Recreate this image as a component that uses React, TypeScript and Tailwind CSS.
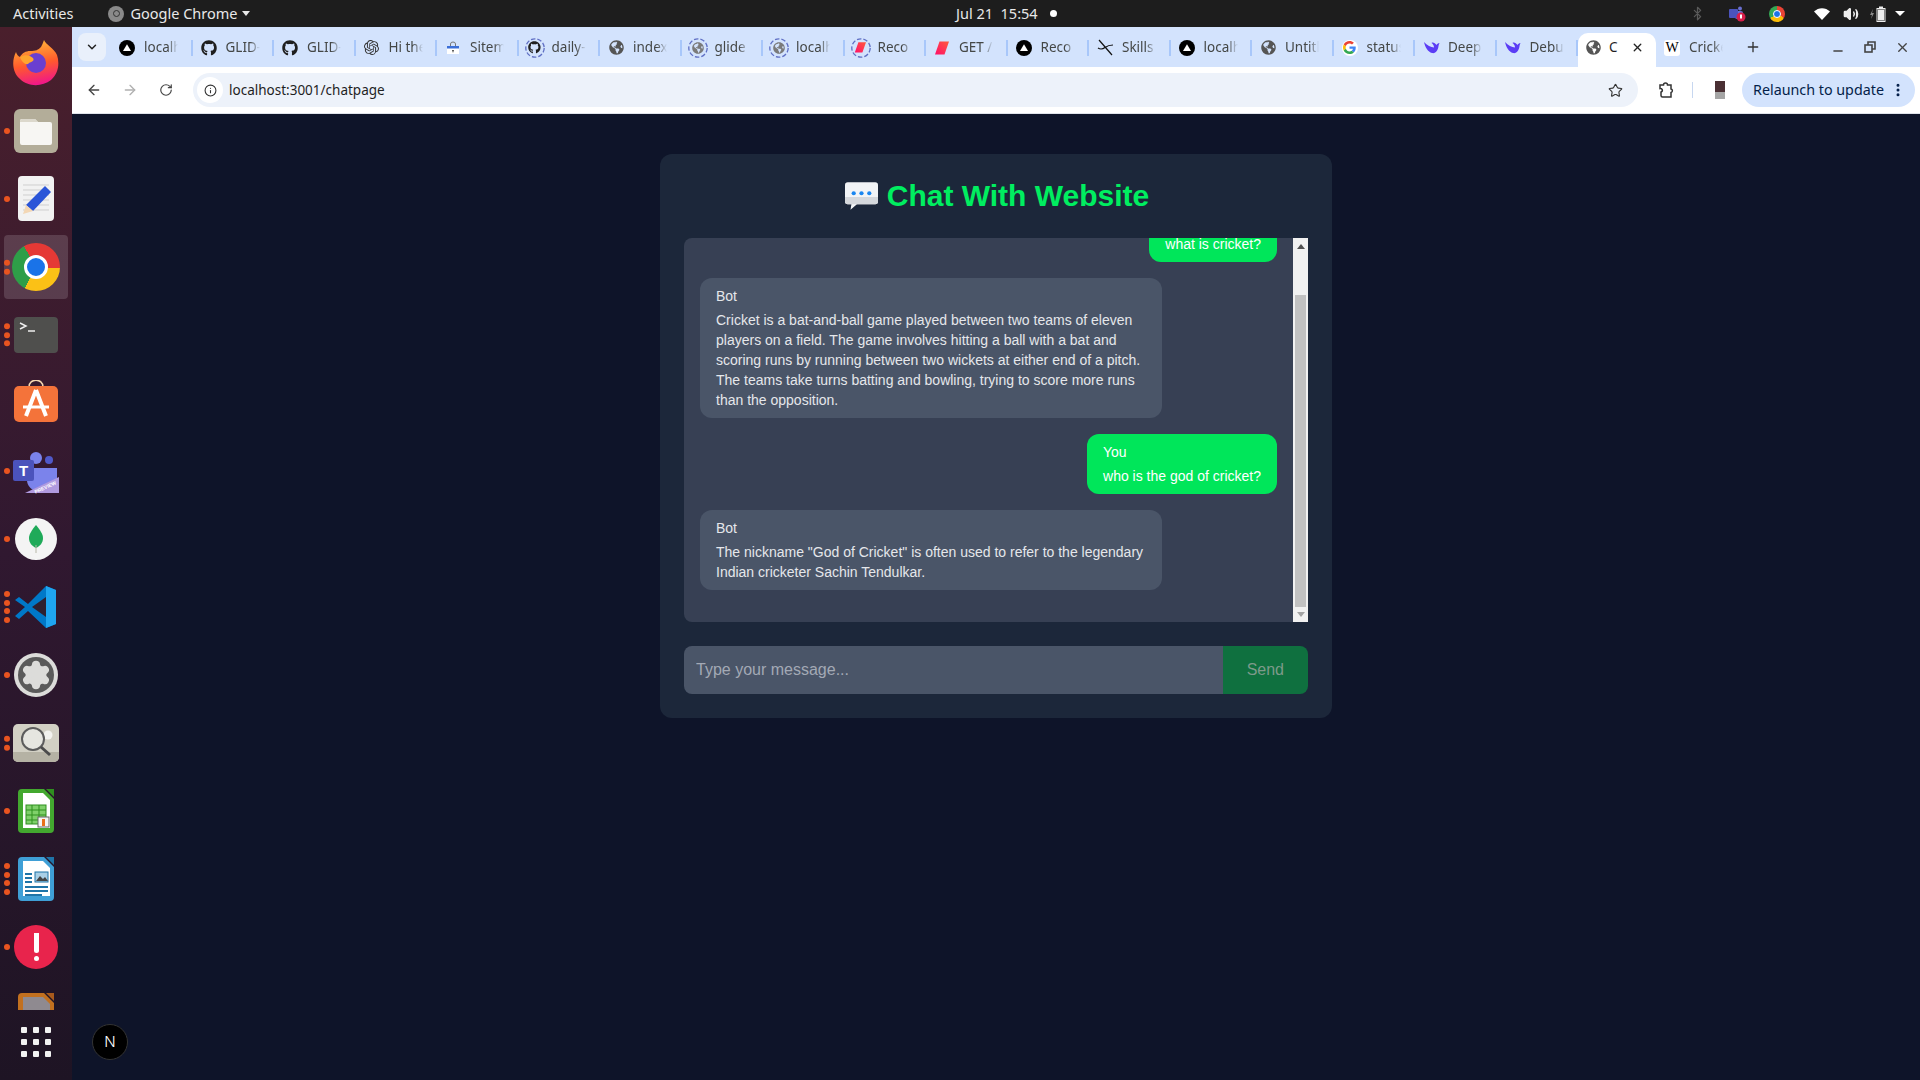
import React from "react";
import { FaGithub, FaGlobeAmericas } from "react-icons/fa";
import { SiOpenai } from "react-icons/si";
import { ArrowLeft, ArrowRight, RotateCw, Info, Star, MoreVertical, X, Plus, Minus, ChevronDown, Bluetooth, Volume2, Settings } from "lucide-react";

type Fav = "vercel" | "github" | "openai" | "site" | "globe" | "red" | "slash" | "google" | "deep" | "wiki";

type Tab = { title: string; fav: Fav; ring?: boolean; active?: boolean };

const tabs: Tab[] = [
  { title: "localhost", fav: "vercel" },
  { title: "GLID-", fav: "github" },
  { title: "GLID-", fav: "github" },
  { title: "Hi there", fav: "openai" },
  { title: "Sitemap", fav: "site" },
  { title: "daily-", fav: "github", ring: true },
  { title: "index", fav: "globe" },
  { title: "glide", fav: "globe", ring: true },
  { title: "localhost", fav: "globe", ring: true },
  { title: "Reco", fav: "red", ring: true },
  { title: "GET /", fav: "red" },
  { title: "Reco", fav: "vercel" },
  { title: "Skills", fav: "slash" },
  { title: "localhost", fav: "vercel" },
  { title: "Untitled", fav: "globe" },
  { title: "status", fav: "google" },
  { title: "Deep", fav: "deep" },
  { title: "Debug", fav: "deep" },
  { title: "Cricket", fav: "globe", active: true },
  { title: "Cricket", fav: "wiki" },
];

// small tab icon, the ones packages dont have are drawn by hand
function Favicon({ fav, ring }: { fav: Fav; ring?: boolean }) {
  let icon: React.ReactNode = null;
  const small = ring ? 0.8 : 1;
  if (fav === "github") icon = <FaGithub size={16 * small} color="#1f1f1f" />;
  if (fav === "openai") icon = <SiOpenai size={15} color="#333" />;
  if (fav === "globe") icon = <FaGlobeAmericas size={15 * small} color={ring ? "#7a7a7a" : "#555"} />;
  if (fav === "vercel")
    icon = (
      <svg width="16" height="16" viewBox="0 0 16 16">
        <circle cx="8" cy="8" r="8" fill="#000" />
        <path d="M8 4.200 12 11H4z" fill="#fff" />
      </svg>
    );
  if (fav === "site")
    icon = (
      <svg width="14" height="14" viewBox="0 0 14 14">
        <rect x="1" y="5" width="12" height="8" fill="#fff" />
        <rect x="1" y="5" width="12" height="2.500" fill="#3b6fd8" />
        <path d="M4.500 5V3a2.500 2 0 0 1 5 0v2" fill="none" stroke="#777" strokeWidth="1" />
        <path d="M6 9h2l-1 3z" fill="#444" />
      </svg>
    );
  if (fav === "red")
    icon = (
      <svg width={16 * small} height={16 * small} viewBox="0 0 16 16">
        <defs>
          <linearGradient id="redfav" x1="0" y1="1" x2="1" y2="0">
            <stop offset="0" stopColor="#ff0f6a" />
            <stop offset="1" stopColor="#ff5a3c" />
          </linearGradient>
        </defs>
        <path d="M5.500 1.500H15L10.500 14.500H1z" fill="url(#redfav)" />
      </svg>
    );
  if (fav === "slash")
    icon = (
      <svg width="17" height="17" viewBox="0 0 17 17" fill="none" stroke="#111" strokeWidth="1.2">
        <path d="M2 1 15 16" />
        <path d="M1 9c3 2 5 1 7-.5s4-2.500 8-2.500" />
      </svg>
    );
  if (fav === "google")
    icon = (
      <span className="flex h-[16px] w-[16px] items-center justify-center rounded-full bg-white">
        <svg width="13" height="13" viewBox="0 0 48 48">
          <path fill="#EA4335" d="M24 9.500c3.500 0 6.700 1.200 9.200 3.600l6.900-6.900C35.900 2.400 30.500 0 24 0 14.600 0 6.500 5.400 2.600 13.200l8 6.200C12.400 13.700 17.700 9.500 24 9.500z" />
          <path fill="#4285F4" d="M47 24.500c0-1.600-.1-3.100-.4-4.500H24v9h12.900c-.6 3-2.200 5.500-4.700 7.200l7.700 6C44.400 38.100 47 31.900 47 24.500z" />
          <path fill="#FBBC05" d="M10.600 28.600c-.5-1.400-.8-3-.8-4.600s.3-3.200.8-4.600l-8-6.200C.9 16.500 0 20.100 0 24s.9 7.500 2.600 10.800z" />
          <path fill="#34A853" d="M24 48c6.500 0 11.900-2.100 15.900-5.800l-7.700-6c-2.200 1.400-4.900 2.300-8.200 2.300-6.300 0-11.600-4.200-13.400-9.900l-8 6.200C6.500 42.600 14.600 48 24 48z" />
        </svg>
      </span>
    );
  if (fav === "deep")
    icon = (
      <svg width="17" height="15" viewBox="0 0 17 15">
        <path d="M1 2c1 5 4 10 8 11 3 .8 5-1.500 6-4.500.6-1.700.4-3.500 1.500-5.500-1.500.4-2.500 1-3 2C12 3 10 2 8.500 3c1.500 1 2.500 2.500 2.500 4.500C8 7.500 4 5 1 2z" fill="#5b3df5" />
      </svg>
    );
  if (fav === "wiki")
    icon = (
      <span className="flex h-[16px] w-[16px] items-center justify-center rounded-[3px] bg-white text-[14px] leading-none text-black [font-family:'Liberation_Serif',serif]">
        W
      </span>
    );
  if (!ring) return <span className="flex h-[18px] w-[18px] items-center justify-center">{icon}</span>;
  return (
    <span className="relative flex h-[20px] w-[20px] -ml-[1px] -mr-[1px] items-center justify-center">
      <svg width="20" height="20" viewBox="0 0 20 20" className="absolute left-0 top-0">
        <circle cx="10" cy="10" r="9.200" fill="none" stroke="#5f6fc4" strokeWidth="1.300" strokeDasharray="4.500 2" />
      </svg>
      {icon}
    </span>
  );
}

function TabItem({ tab, last }: { tab: Tab; last: boolean }) {
  if (tab.active) {
    return (
      <div className="flex h-[34px] w-[78px] items-center gap-[7px] self-end rounded-t-[10px] bg-white pb-[5px] pl-[6px]">
        <Favicon fav={tab.fav} />
        <span className="w-[9px] overflow-hidden whitespace-nowrap text-[13.500px] text-[#1f1f1f]">{tab.title}</span>
        <X size={13} strokeWidth={2.5} color="#222" className="ml-[6px]" />
      </div>
    );
  }
  return (
    <div className="flex h-[34px] w-[81.500px] items-center self-end pb-[5px] pl-[7px]">
      <Favicon fav={tab.fav} ring={tab.ring} />
      <span className="ml-[8px] w-[34px] overflow-hidden whitespace-nowrap text-[13.500px] text-[#444746] [mask-image:linear-gradient(to_right,black_70%,transparent)]">
        {tab.title}
      </span>
      {!last && <span className="ml-auto h-[16px] w-[2px] bg-[#a8c7fa]" />}
    </div>
  );
}

function TopBar() {
  return (
    <div className="flex h-[27px] items-center bg-[#1d1d1d] text-[14.500px] text-[#e8e8e8] [font-family:'Noto_Sans',sans-serif]">
      <div className="flex w-[956px] items-center pl-[13px]">
        <span>Activities</span>
        <span className="ml-[35px] flex h-[16px] w-[16px] items-center justify-center rounded-full bg-[#8a8a8a]">
          <span className="h-[7px] w-[7px] rounded-full border border-[#333]" />
        </span>
        <span className="ml-[6px]">Google Chrome</span>
        <span className="ml-[5px] h-0 w-0 border-x-[4px] border-t-[5px] border-x-transparent border-t-[#e8e8e8]" />
      </div>
      <span>Jul 21&nbsp; 15:54</span>
      <span className="ml-[12px] h-[7px] w-[7px] rounded-full bg-white" />
      <div className="ml-auto flex items-center pr-[15px]">
        <Bluetooth size={15} color="#5a5a5a" />
        <svg width="18" height="18" viewBox="0 0 18 18" className="ml-[23px]">
          <circle cx="12" cy="3.500" r="2" fill="#6a6fd0" />
          <rect x="7" y="6" width="8" height="8" rx="2" fill="#6a6fd0" />
          <rect x="1" y="4" width="9" height="9" rx="1" fill="#4b53bc" />
          <circle cx="13" cy="12" r="4.500" fill="#d81e4a" />
          <rect x="12" y="9.500" width="2" height="4" fill="#fff" />
        </svg>
        <span className="ml-[23px] flex h-[16px] w-[16px] items-center justify-center rounded-full bg-[conic-gradient(#ea4335_0_33%,#fbbc05_33%_66%,#34a853_66%)]">
          <span className="h-[8px] w-[8px] rounded-full border border-white bg-[#1a73e8]" />
        </span>
        <svg width="16" height="12" viewBox="0 0 16 12" className="ml-[29px]">
          <path d="M0 3.500C4.500-1 11.500-1 16 3.500L8 12z" fill="#fff" />
        </svg>
        <Volume2 size={16} color="#eee" fill="#eee" className="ml-[13px]" />
        <svg width="18" height="16" viewBox="0 0 18 16" className="ml-[10px]">
          <path d="M4 3 1 9h2l-1 4 3-6H3z" fill="#8a8a8a" />
          <rect x="10" y="0.500" width="4" height="2" fill="#eee" />
          <rect x="8" y="2.500" width="8" height="13" fill="none" stroke="#eee" />
          <rect x="9" y="3.500" width="6" height="11" fill="#eee" />
        </svg>
        <span className="ml-[8px] h-0 w-0 border-x-[5px] border-t-[5px] border-x-transparent border-t-white" />
      </div>
    </div>
  );
}

function BrowserBar() {
  return (
    <div className="[font-family:'Noto_Sans',sans-serif]">
      <div className="flex h-[40px] items-stretch bg-[#d3e3fd]">
        <div className="ml-[6px] mr-[5px] mt-[6px] flex h-[28px] w-[28px] items-center justify-center rounded-[8px] bg-[#e9f0fb]">
          <ChevronDown size={14} strokeWidth={2.5} color="#222" />
        </div>
        {tabs.map((t, i) => (
          <TabItem key={i} tab={t} last={i === tabs.length - 1} />
        ))}
        <Plus size={16} strokeWidth={2} color="#333" className="ml-[7px] mt-[12px]" />
        <div className="ml-auto flex items-center gap-[18px] pr-[10px]">
          <Minus size={14} strokeWidth={2.5} color="#444" className="mt-[8px]" />
          <svg width="14" height="14" viewBox="0 0 14 14" fill="none" stroke="#444" strokeWidth="1.600">
            <rect x="2" y="5" width="7" height="7" />
            <path d="M5 5V2h7v7H9" />
          </svg>
          <X size={15} strokeWidth={2.2} color="#444" />
        </div>
      </div>
      <div className="flex h-[47px] items-center border-b border-[#dfe3ea] bg-white">
        <ArrowLeft size={16} strokeWidth={2} color="#444" className="ml-[14px]" />
        <ArrowRight size={16} strokeWidth={2} color="#b0b0b0" className="ml-[20px]" />
        <RotateCw size={14} strokeWidth={2} color="#444" className="ml-[21px]" />
        <div className="ml-[20px] flex h-[34px] w-[1445px] items-center rounded-full bg-[#edf2fa] pl-[4px]">
          <span className="flex h-[26px] w-[26px] items-center justify-center rounded-full bg-white">
            <Info size={13} strokeWidth={2} color="#333" />
          </span>
          <span className="ml-[6px] text-[13.500px] text-[#1f1f1f]">localhost:3001/chatpage</span>
          <Star size={15} strokeWidth={1.800} color="#333" className="ml-auto mr-[15px]" />
        </div>
        <svg width="16" height="16" viewBox="0 0 16 16" fill="none" stroke="#333" strokeWidth="1.500" className="ml-[20px]">
          <path d="M2 3h3.500a2 2 0 0 1 4 0H13v4a1.800 1.800 0 0 1 0 3.500V15H4.500a1.500 1.500 0 0 1-1.500-1.500V10a1.800 1.800 0 0 0-1-3.500z" />
        </svg>
        <span className="ml-[18px] h-[16px] w-[1px] bg-[#c7d7f0]" />
        <span className="ml-[22px] flex h-[18px] w-[10px] flex-col">
          <span className="h-[11px] bg-[#4a3034]" />
          <span className="h-[7px] bg-[#a5a5a5]" />
        </span>
        <div className="ml-[17px] flex h-[34px] w-[173px] items-center rounded-full bg-[#d3e3fd] pl-[11px] text-[14.300px] text-[#041e49]">
          <span>Relaunch to update</span>
          <MoreVertical size={16} strokeWidth={2.5} color="#041e49" className="ml-[6px]" />
        </div>
      </div>
    </div>
  );
}

function DockIcon({ name }: { name: string }) {
  switch (name) {
    case "firefox":
      return (
        <svg width="48" height="48" viewBox="0 0 48 48">
          <defs>
            <linearGradient id="ffx" x1="0.3" y1="0" x2="0.5" y2="1">
              <stop offset="0" stopColor="#ffbd3a" />
              <stop offset="0.55" stopColor="#ff5a2c" />
              <stop offset="1" stopColor="#f0168a" />
            </linearGradient>
          </defs>
          <path d="M32 1c2 5 10 8 13 15 3 9 1 19-6 25-9 7-23 7-31-1C1 34-1 23 4 13c1 3 2 4 4 5 2-4 6-6 10-6 6 0 8-1 11-4 1-2 2-4 3-7z" fill="url(#ffx)" />
          <circle cx="24" cy="24" r="10" fill="#6a3fd0" />
          <path d="M8 18c5-3 10-2 13 1 2 3-2 4-4 5-2 3-7 0-9-6z" fill="#ffa52e" />
        </svg>
      );
    case "files":
      return (
        <span className="flex h-[44px] w-[44px] items-center justify-center rounded-[6px] bg-[#b3ad99]">
          <svg width="32" height="28" viewBox="0 0 32 28">
            <path d="M2 2h13l3 3h12a2 2 0 0 1 2 2v19a2 2 0 0 1-2 2H2a2 2 0 0 1-2-2V4a2 2 0 0 1 2-2z" fill="#f7f6f3" />
            <path d="M0 4a2 2 0 0 1 2-2h13l3 3H0z" fill="#dcd8cc" />
          </svg>
        </span>
      );
    case "gedit":
      return (
        <svg width="36" height="46" viewBox="0 0 36 46">
          <rect width="36" height="45" rx="4" fill="#f2f2f2" />
          <path d="M5 9h26M5 14h26M5 19h26M5 24h26M5 29h26M5 34h26" stroke="#cfcfcf" />
          <path d="M27 10l6 6-18 19-7-6z" fill="#2a55d8" />
          <path d="M8 29l7 6-10 3z" fill="#f3d7b5" />
        </svg>
      );
    case "chrome":
      return (
        <span className="flex h-[48px] w-[48px] items-center justify-center rounded-full bg-[conic-gradient(from_-30deg,#e53935_0_34%,#fbc116_34%_66%,#2e9e48_66%)]">
          <span className="h-[24px] w-[24px] rounded-full border-[3px] border-white bg-[#1a73e8]" />
        </span>
      );
    case "terminal":
      return (
        <svg width="44" height="36" viewBox="0 0 44 36">
          <rect width="44" height="36" rx="4" fill="#4f4f4d" />
          <path d="M6 6l6 3-6 3" fill="none" stroke="#eee" strokeWidth="1.500" />
          <path d="M14 14h7" stroke="#eee" strokeWidth="1.500" />
        </svg>
      );
    case "store":
      return (
        <svg width="44" height="44" viewBox="0 0 44 44" className="-mt-[2px]">
          <path d="M15 7c0-9 14-9 14 0" fill="none" stroke="#f6d7b0" strokeWidth="1.500" />
          <rect y="6" width="44" height="36" rx="5" fill="#f4733a" />
          <path d="M22 10 12 36M22 10l10 26" stroke="#fff" strokeWidth="4" />
          <path d="M9 27h26" stroke="#fff" strokeWidth="3" />
        </svg>
      );
    case "teams":
      return (
        <svg width="46" height="44" viewBox="0 0 46 44" className="mt-[3px]">
          <circle cx="23" cy="7" r="6" fill="#7b83eb" />
          <circle cx="36" cy="9" r="4" fill="#5059c9" />
          <path d="M14 17h30v14a9 9 0 0 1-9 9H25a11 11 0 0 1-11-11z" fill="#7b83eb" />
          <rect y="9" width="21" height="21" rx="2" fill="#4b53bc" />
          <text x="10.500" y="25" textAnchor="middle" fontSize="15" fontWeight="700" fill="#fff" fontFamily="Liberation Sans">T</text>
          <path d="M46 26v16H12z" fill="#b09adf" />
          <text x="33" y="38" textAnchor="middle" fontSize="5" fontWeight="700" fill="#fff" fontFamily="Liberation Sans" transform="rotate(-25 33 38)">PREVIEW</text>
        </svg>
      );
    case "mongo":
      return (
        <span className="flex h-[42px] w-[42px] items-center justify-center rounded-full bg-[#f4f4f4]">
          <svg width="14" height="28" viewBox="0 0 14 28">
            <path d="M7 0c4 5 7 9 7 13 0 5-3 8-7 10-4-2-7-5-7-10C0 9 3 5 7 0z" fill="#1faa59" />
            <path d="M7 20v8" stroke="#b8b8a8" />
          </svg>
        </span>
      );
    case "vscode":
      return (
        <svg width="44" height="44" viewBox="0 0 44 44">
          <path d="M32 1 14 19 5 12l-4 3 10 7-10 9 4 3 9-8 18 17 10-4V5z" fill="#0078c8" />
          <path d="M32 1l10 4v34l-10 4z" fill="#1fa5f0" />
          <path d="M32 12v20L18 22z" fill="#2e2030" />
        </svg>
      );
    case "settings":
      return (
        <span className="flex h-[44px] w-[44px] items-center justify-center rounded-full bg-[#dcdcda]">
          <span className="flex h-[36px] w-[36px] items-center justify-center rounded-full bg-[#5a5a5a]">
            <Settings size={32} color="#dcdcda" fill="#dcdcda" strokeWidth={1.5} />
          </span>
        </span>
      );
    case "search":
      return (
        <svg width="46" height="38" viewBox="0 0 46 38">
          <rect width="46" height="38" rx="5" fill="#d2d0c4" />
          <path d="M0 28h46v5a5 5 0 0 1-5 5H5a5 5 0 0 1-5-5z" fill="#b5b2a4" />
          <circle cx="35" cy="11" r="4.500" fill="#f2f2ee" />
          <circle cx="20" cy="15" r="11" fill="#e6e6e0" stroke="#5c5c5c" strokeWidth="2" />
          <path d="M28 23l9 8" stroke="#4b4b4b" strokeWidth="3" />
        </svg>
      );
    case "calc":
    case "doc":
    case "next": {
      const dark = name === "calc" ? "#2f8f1f" : name === "doc" ? "#1f74a8" : "#a85a1c";
      const light = name === "calc" ? "#43a82f" : name === "doc" ? "#3f9fd6" : "#c2701f";
      return (
        <svg width="36" height="44" viewBox="0 0 36 44">
          <path d="M4 0h22l10 10v30a4 4 0 0 1-4 4H4a4 4 0 0 1-4-4V4a4 4 0 0 1 4-4z" fill={light} />
          <path d="M5 4h20l7 7v28H5z" fill={name === "next" ? "#8f8a90" : "#fff"} />
          <path d="M28 0h8v8z" fill={dark} />
          {name === "calc" && (
            <g>
              <rect x="8" y="16" width="20" height="19" fill="#7fd06a" stroke="#2f8f1f" />
              <path d="M8 21h20M8 26h20M8 31h20M14 16v19M21 16v19" stroke="#2f8f1f" />
              <rect x="20" y="28" width="11" height="10" fill="#f4f4f4" stroke="#666" />
              <rect x="24" y="30" width="3" height="7" fill="#e8701a" />
            </g>
          )}
          {name === "doc" && (
            <g>
              <path d="M7 17h7M7 21h7M7 25h7M7 30h23M7 34h23M7 38h17" stroke="#1f74a8" strokeWidth="2" />
              <rect x="17" y="15" width="13" height="10" fill="#a9cfe6" stroke="#1f74a8" />
              <path d="M18 24l4-5 3 3 2-2 3 4z" fill="#444" />
            </g>
          )}
        </svg>
      );
    }
    case "alert":
      return (
        <span className="flex h-[44px] w-[44px] flex-col items-center justify-center gap-[3px] rounded-full bg-[#e8244c]">
          <span className="h-[20px] w-[5px] rounded-b-full bg-white" />
          <span className="h-[5px] w-[5px] rounded-full bg-white" />
        </span>
      );
    default:
      return null;
  }
}

const dockItems: { name: string; dots: number; active?: boolean }[] = [
  { name: "firefox", dots: 0 },
  { name: "files", dots: 1 },
  { name: "gedit", dots: 1 },
  { name: "chrome", dots: 2, active: true },
  { name: "terminal", dots: 3 },
  { name: "store", dots: 0 },
  { name: "teams", dots: 1 },
  { name: "mongo", dots: 1 },
  { name: "vscode", dots: 4 },
  { name: "settings", dots: 1 },
  { name: "search", dots: 2 },
  { name: "calc", dots: 1 },
  { name: "doc", dots: 4 },
  { name: "alert", dots: 1 },
  { name: "next", dots: 0 },
];

function Dock() {
  return (
    <div className="flex h-[1053px] w-[72px] shrink-0 flex-col bg-gradient-to-b from-[#4a1f2c] via-[#301830] to-[#1e1424]">
      <div className="h-[983px] overflow-hidden pt-[2px]">
        {dockItems.map((d) => (
          <div key={d.name} className="relative flex h-[68px] items-center justify-center">
            {d.active && <span className="absolute left-[4px] top-[2px] h-[64px] w-[64px] rounded-[4px] bg-white/15" />}
            <span className="absolute left-[4px] top-1/2 flex -translate-y-1/2 flex-col gap-[2.700px]">
              {Array.from({ length: d.dots }).map((_, i) => (
                <span key={i} className="h-[6px] w-[6px] rounded-full bg-[#e95420]" />
              ))}
            </span>
            <span className="relative">
              <DockIcon name={d.name} />
            </span>
          </div>
        ))}
      </div>
      <div className="flex flex-1 items-start justify-center pt-[17px]">
        <div className="grid grid-cols-3 gap-[6px]">
          {Array.from({ length: 9 }).map((_, i) => (
            <span key={i} className="h-[6px] w-[6px] rounded-[1px] bg-[#f2f2f2]" />
          ))}
        </div>
      </div>
    </div>
  );
}

function Bubble({ who, text }: { who: "You" | "Bot"; text: string }) {
  const mine = who === "You";
  return (
    <div className={mine ? "mb-4 flex shrink-0 justify-end" : "mb-4 flex shrink-0 justify-start"}>
      <div className={mine ? "max-w-[80%] rounded-xl bg-[#00e65a] px-4 py-2 text-sm text-white" : "max-w-[80%] rounded-xl bg-[#4a5568] px-4 py-2 text-sm text-[#e5e7eb]"}>
        <div className="mb-1">{who}</div>
        <div>{text}</div>
      </div>
    </div>
  );
}

function Scrollbar() {
  return (
    <div className="flex h-full w-[15px] shrink-0 flex-col items-center bg-[#f1f1f1]">
      <span className="mt-[6px] h-0 w-0 border-x-[4px] border-b-[5px] border-x-transparent border-b-[#505050]" />
      <span className="mt-[46px] h-[312px] w-[11px] bg-[#c1c1c1]" />
      <span className="mt-[5px] h-0 w-0 border-x-[4px] border-t-[5px] border-x-transparent border-t-[#a3a3a3]" />
    </div>
  );
}

export default function App() {
  return (
    <div className="flex h-[1080px] w-[1920px] flex-col overflow-hidden bg-[#0e1429]">
      <TopBar />
      <div className="flex flex-1">
        <Dock />
        <div className="flex flex-1 flex-col">
          <BrowserBar />
          <div className="relative flex flex-1 justify-center bg-[#0e1429] pt-10 [font-family:'Liberation_Sans',sans-serif]">
            <div className="h-[564px] w-[672px] rounded-xl bg-[#1c273a] p-6">
              <h1 className="mb-6 flex h-9 items-center justify-center gap-[9px] pl-[2px] text-[30px] font-bold leading-9 text-[#00ee60]">
                <svg width="33" height="28" viewBox="0 0 36 30">
                  <path d="M3 0h30a3 3 0 0 1 3 3v18a3 3 0 0 1-3 3H13l-7 6 1-6H3a3 3 0 0 1-3-3V3a3 3 0 0 1 3-3z" fill="#f2f4f6" />
                  <path d="M0 16h36v5a3 3 0 0 1-3 3H3a3 3 0 0 1-3-3z" fill="#d5d8dc" />
                  <circle cx="9.500" cy="12" r="2.300" fill="#1a86f0" />
                  <circle cx="18" cy="12" r="2.300" fill="#1a86f0" />
                  <circle cx="26.500" cy="12" r="2.300" fill="#1a86f0" />
                </svg>
                <span>Chat With Website</span>
              </h1>
              <div className="mb-6 flex h-96 overflow-hidden rounded-l-lg bg-[#374054]">
                <div className="flex flex-1 flex-col justify-end overflow-hidden p-4">
                  <Bubble who="You" text="what is cricket?" />
                  <Bubble
                    who="Bot"
                    text="Cricket is a bat-and-ball game played between two teams of eleven players on a field. The game involves hitting a ball with a bat and scoring runs by running between two wickets at either end of a pitch. The teams take turns batting and bowling, trying to score more runs than the opposition."
                  />
                  <Bubble who="You" text="who is the god of cricket?" />
                  <Bubble who="Bot" text={'The nickname "God of Cricket" is often used to refer to the legendary Indian cricketer Sachin Tendulkar.'} />
                </div>
                <Scrollbar />
              </div>
              <div className="flex h-12">
                <input
                  placeholder="Type your message..."
                  className="min-w-0 flex-1 rounded-l-lg bg-[#4a5568] px-3 text-base text-white outline-none placeholder:text-[#a3a9b5]"
                  readOnly
                />
                <button className="rounded-r-lg bg-[#0f703f] px-6 text-base text-[#7d9a8a]">Send</button>
              </div>
            </div>
            <div className="absolute bottom-[20px] left-[20px] flex h-[36px] w-[36px] items-center justify-center rounded-full border border-[#333] bg-black text-[15px] font-light text-white [font-family:'Inter',sans-serif]">
              N
            </div>
          </div>
        </div>
      </div>
    </div>
  );
}
